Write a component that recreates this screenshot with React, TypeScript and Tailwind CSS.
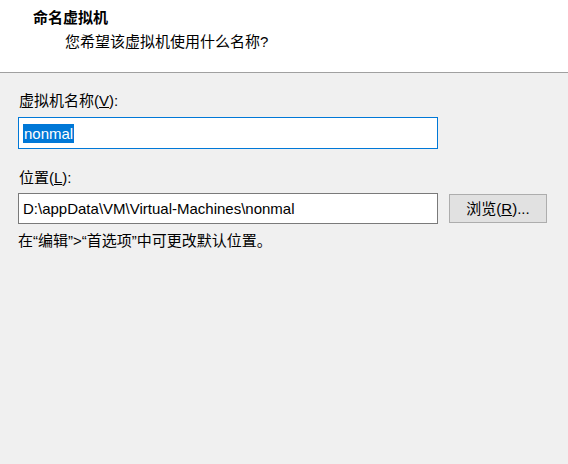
import React from 'react';

const font = { fontFamily: '"Liberation Sans", "Noto Sans CJK SC", sans-serif' };

export default function App() {
  return (
    <div className="w-[568px] h-[464px] flex flex-col bg-[#f0f0f0] text-black text-[15px]" style={font}>
      <div className="h-[73px] bg-white border-b border-[#a0a0a0] pl-[33px] pt-[7px]">
        <div className="font-bold leading-[22px]">命名虚拟机</div>
        <div className="pl-[32px] leading-[22px] mt-[2px]">您希望该虚拟机使用什么名称?</div>
      </div>
      <div className="flex flex-col pl-[18px] pt-[18px]">
        <div className="pl-[1px] leading-[20px]">
          虚拟机名称(<span className="underline">V</span>):
        </div>
        <div className="mt-[6px] w-[420px] h-[32px] bg-white border border-[#0078d7] flex items-center pl-[4px]">
          <span className="bg-[#0078d7] text-white leading-[19px] px-[1px]">nonmal</span>
        </div>
        <div className="mt-[19px] pl-[1px] leading-[20px]">
          位置(<span className="underline">L</span>):
        </div>
        <div className="mt-[5px] flex items-start gap-[11px]">
          <div className="w-[420px] h-[31px] bg-white border border-[#7a7a7a] flex items-center pl-[4px] leading-[20px]">
            D:\appData\VM\Virtual-Machines\nonmal
          </div>
          <button className="mt-[1px] w-[98px] h-[29px] bg-[#e1e1e1] border border-[#adadad] flex items-center justify-center leading-[20px]">
            浏览(<span className="underline">R</span>)...
          </button>
        </div>
        <div className="mt-[7px] leading-[20px]">在“编辑”&gt;“首选项”中可更改默认位置。</div>
      </div>
    </div>
  );
}
